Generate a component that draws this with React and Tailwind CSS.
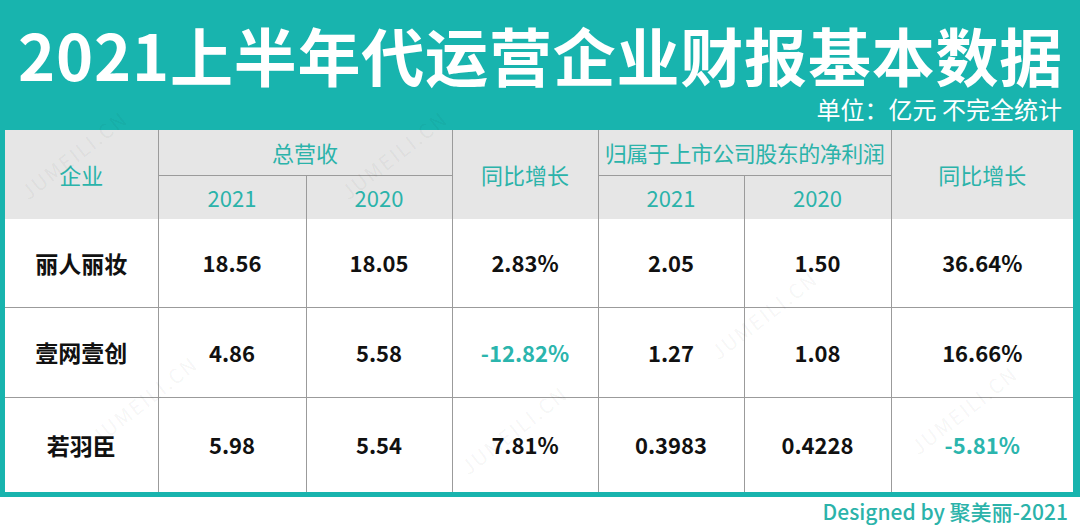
const FONT = { fontFamily: '"Noto Sans CJK SC", "Noto Sans", sans-serif' };

const rows = [
  { name: "丽人丽妆", rev21: "18.56", rev20: "18.05", revYoy: "2.83%", np21: "2.05", np20: "1.50", npYoy: "36.64%", h: "h-[88px]" },
  { name: "壹网壹创", rev21: "4.86", rev20: "5.58", revYoy: "-12.82%", np21: "1.27", np20: "1.08", npYoy: "16.66%", h: "h-[90px]" },
  { name: "若羽臣", rev21: "5.98", rev20: "5.54", revYoy: "7.81%", np21: "0.3983", np20: "0.4228", npYoy: "-5.81%", h: "h-[95px]" },
];

// faint diagonal watermarks
const marks = [
  [10, 140], [330, 140], [700, 300], [80, 385], [450, 415], [900, 395],
];

function Val({ v, last }) {
  const neg = v.startsWith("-");
  return (
    <td
      className={`border-[#9b9b9b] text-center text-[22px] font-semibold ${last ? "" : "border-r"} ${neg ? "text-[#2bb5ad] font-medium" : "text-[#111]"}`}
    >
      {v}
    </td>
  );
}

export default function App() {
  return (
    <div className="relative w-[1080px] h-[527px] overflow-hidden bg-white" style={FONT}>
      {/* Title band */}
      <div className="h-[130px] bg-[#18b4ae] px-[18px] flex flex-col">
        <h1 className="pt-[14px] text-[63px] leading-[80px] font-bold text-white tracking-[0.8px] whitespace-nowrap">
          2021上半年代运营企业财报基本数据
        </h1>
        <p className="self-end text-[24px] leading-[30px] text-white whitespace-nowrap">
          单位：亿元 不完全统计
        </p>
      </div>

      {/* Table */}
      <div className="border-l-[5px] border-r-[7px] border-b-[5px] border-[#18b4ae]">
        <table className="w-full table-fixed border-collapse">
          <colgroup>
            <col className="w-[153px]" />
            <col className="w-[148px]" />
            <col className="w-[146px]" />
            <col className="w-[146px]" />
            <col className="w-[146px]" />
            <col className="w-[147px]" />
            <col className="w-[182px]" />
          </colgroup>
          <thead className="bg-[#e6e6e6] text-[#2bb3aa] text-[22px] font-normal">
            <tr className="h-[45px]">
              <th rowSpan={2} className="font-normal border-r border-[#9b9b9b]">企业</th>
              <th colSpan={2} className="font-normal border-r border-b border-[#9b9b9b]">总营收</th>
              <th rowSpan={2} className="font-normal border-r border-[#9b9b9b]">同比增长</th>
              <th colSpan={2} className="font-normal border-r border-b border-[#9b9b9b] whitespace-nowrap tracking-[-0.5px]">归属于上市公司股东的净利润</th>
              <th rowSpan={2} className="font-normal">同比增长</th>
            </tr>
            <tr className="h-[44px]">
              <th className="font-normal border-r border-[#9b9b9b]">2021</th>
              <th className="font-normal border-r border-[#9b9b9b]">2020</th>
              <th className="font-normal border-r border-[#9b9b9b]">2021</th>
              <th className="font-normal border-r border-[#9b9b9b]">2020</th>
            </tr>
          </thead>
          <tbody>
            {rows.map((r, i) => (
              <tr key={r.name} className={`${r.h} ${i < rows.length - 1 ? "border-b border-[#9b9b9b]" : ""}`}>
                <td className="border-r border-[#9b9b9b] text-center text-[23px] font-semibold text-[#111]">{r.name}</td>
                <Val v={r.rev21} />
                <Val v={r.rev20} />
                <Val v={r.revYoy} />
                <Val v={r.np21} />
                <Val v={r.np20} />
                <Val v={r.npYoy} last />
              </tr>
            ))}
          </tbody>
        </table>
      </div>

      {/* Footer */}
      <div className="flex justify-end pr-[12px]">
        <p className="text-[21px] leading-[29px] font-medium text-[#2bb3aa] whitespace-nowrap">
          Designed by 聚美丽-2021
        </p>
      </div>

      {marks.map(([x, y], i) => (
        <span
          key={i}
          className="absolute -rotate-[38deg] text-[20px] tracking-[2px] text-black/[0.05] pointer-events-none whitespace-nowrap"
          style={{ left: x, top: y }}
        >
          JUMEILI.CN
        </span>
      ))}
    </div>
  );
}
